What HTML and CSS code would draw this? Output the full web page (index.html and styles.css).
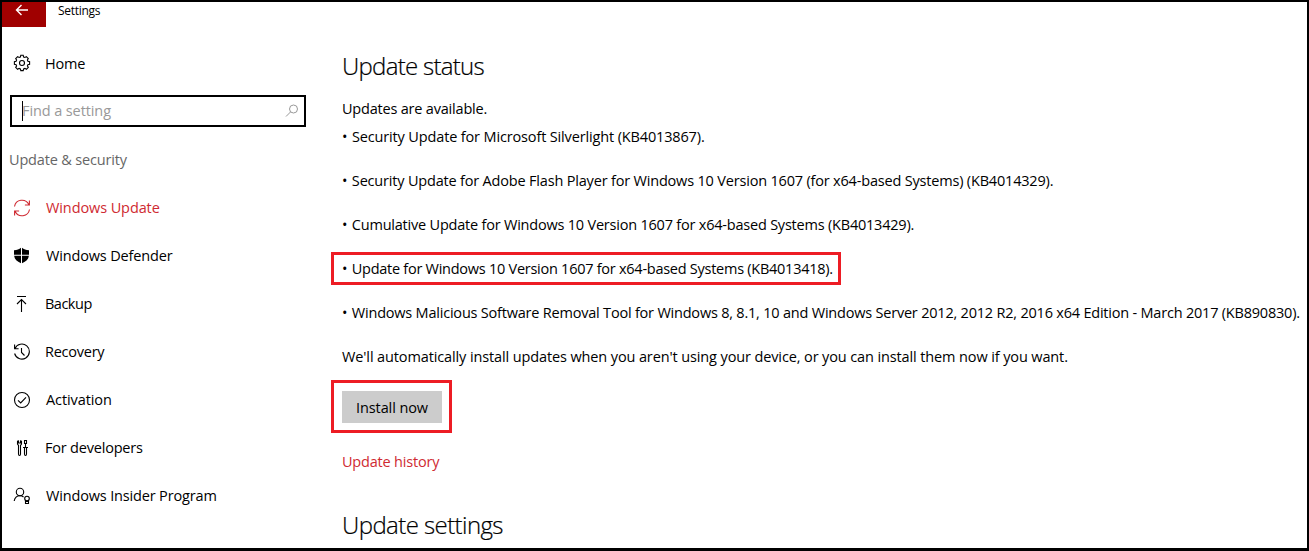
FILE: index.html
```
<!DOCTYPE html>
<html lang="en">
<head>
<meta charset="utf-8">
<title>Settings</title>
<link rel="stylesheet" href="styles.css">
</head>
<body>
<div class="window">
  <header class="titlebar">
    <button class="back" aria-label="Back"><svg width="14" height="12" viewBox="0 0 14 12"><path d="M13 6H1.500M6.500 1L1.500 6l5 5"/></svg></button>
    <span class="title">Settings</span>
  </header>
  <div class="body">
    <nav class="sidebar">
      <a class="item home"><svg class="icon" viewBox="0 0 18 18"><circle cx="9" cy="9" r="2.500"/><path d="M7.800 1.300h2.400l.4 1.700 1.300.5 1.500-.9 1.900 1.900-.9 1.500.5 1.300 1.700.4v2.500l-1.700.4-.5 1.300.9 1.500-1.900 1.900-1.500-.9-1.300.5-.4 1.700H7.800l-.4-1.700-1.300-.5-1.500.9-1.900-1.900.9-1.500-.5-1.300-1.700-.4V7.700l1.700-.4.500-1.300-.9-1.500 1.900-1.900 1.500.9 1.300-.5z"/></svg><span class="w-home">Home</span></a>
      <div class="search"><span class="caret"></span><span class="placeholder">Find a setting</span><svg class="lens" viewBox="0 0 14 14"><circle cx="8.500" cy="5" r="4"/><path d="M5.600 7.900L1 12.500"/></svg></div>
      <h2 class="group">Update &amp; security</h2>
      <a class="item active"><svg class="icon" viewBox="0 0 18 18"><path d="M1.500 7.500A7.600 7.600 0 0 1 15.800 5.500M16.400 1.500v4.500h-4.500M16.500 10.500A7.600 7.600 0 0 1 2.200 12.500M1.600 16.500v-4.500h4.500"/></svg><span class="w-update">Windows Update</span></a>
      <a class="item"><svg class="icon" viewBox="0 0 18 18"><path class="solid" d="M8 .8v7H1V3.200C4 3.200 6.200 2.400 8 .8zM9 .8c1.800 1.600 4 2.400 7 2.400v4.600H9zM1.100 8.800H8v7.400C4 14.500 1.600 12.300 1.100 8.800zM9 8.800h6.900c-.5 3.500-2.800 5.700-6.900 7.400z"/></svg><span class="w-defender">Windows Defender</span></a>
      <a class="item"><svg class="icon" viewBox="0 0 18 18"><path d="M4 1.500h9M8.500 17V4.500M4 9l4.500-4.500L13 9"/></svg><span class="w-backup">Backup</span></a>
      <a class="item"><svg class="icon" viewBox="0 0 18 18"><path d="M2 5.500A7.500 7.500 0 1 1 1.600 10.500M1.600 1.500v4.200h4M8.500 5v4.500l3 3"/></svg><span class="w-recovery">Recovery</span></a>
      <a class="item"><svg class="icon" viewBox="0 0 18 18"><circle cx="9" cy="9" r="7.500"/><path d="M5 9.300l2.700 2.700L13 6.400"/></svg><span class="w-activation">Activation</span></a>
      <a class="item"><svg class="icon" viewBox="0 0 18 18"><path d="M5.500 1.500v2.500h2v-2.500M5.500 1.500L4.500 2.500v2.500l1 1.500v8.500q0 1.500 1 1.500t1-1.500V6.500l1-1.500V2.500L7.500 1.500M11.500 1.500h2v3h-2zM12.500 4.500v4M10 8.500h5M11.500 8.500v6.500q0 1.500 1 1.500t1-1.500V8.500"/></svg><span class="w-dev">For developers</span></a>
      <a class="item"><svg class="icon" viewBox="0 0 18 18"><circle cx="7" cy="5" r="3.700"/><path d="M1.200 14C1.700 10.700 4 8.700 7 8.700c1.500 0 2.600.4 3.500 1.300"/><circle cx="14" cy="11.500" r="2.300"/><path d="M12.500 13.500v3h3v-3M12.500 14.500h3"/></svg><span class="w-insider">Windows Insider Program</span></a>
    </nav>
    <main class="content">
      <h1 class="heading w-status">Update status</h1>
      <p class="available">Updates are available.</p>
      <ul class="updates">
        <li class="w-l1"><span class="dot">•</span> Security Update for Microsoft Silverlight (KB4013867).</li>
        <li class="w-l2"><span class="dot">•</span> Security Update for Adobe Flash Player for Windows 10 Version 1607 (for x64-based Systems) (KB4014329).</li>
        <li class="w-l3"><span class="dot">•</span> Cumulative Update for Windows 10 Version 1607 for x64-based Systems (KB4013429).</li>
        <li class="marked"><span class="dot">•</span> Update for Windows 10 Version 1607 for x64-based Systems (KB4013418).</li>
        <li class="w-l5"><span class="dot">•</span> Windows Malicious Software Removal Tool for Windows 8, 8.1, 10 and Windows Server 2012, 2012 R2, 2016 x64 Edition - March 2017 (KB890830).</li>
      </ul>
      <p class="note">We'll automatically install updates when you aren't using your device, or you can install them now if you want.</p>
      <div class="install-box"><button class="install">Install now</button></div>
      <a class="history">Update history</a>
      <h1 class="heading w-settings">Update settings</h1>
    </main>
  </div>
</div>
</body>
</html>
```
FILE: styles.css
```
* { box-sizing: border-box; }
body { margin: 0; font: 14.5px/20px "Open Sans", "Noto Sans", sans-serif; color: #000; background: #fff; }
h1, h2, p, ul { margin: 0; padding: 0; font-weight: 400; }
button { border: 0; padding: 0; font: inherit; color: inherit; }
.window { width: 1309px; height: 551px; border: 2px solid #000; border-bottom-width: 3px; overflow: hidden; }
.titlebar { display: flex; height: 25px; }
.back { width: 44px; height: 25px; background: #a00000; padding-right: 4px; display: flex; justify-content: center; padding-top: 2px; }
.back svg { fill: none; stroke: #fff; stroke-width: 1.4; }
.title { font-size: 12px; line-height: 18px; margin-left: 12px; letter-spacing: -.3px; }
.body { display: flex; }
.sidebar { width: 329px; padding-top: 12px; flex: none; }
.item { display: flex; align-items: center; height: 48px; padding-left: 11px; gap: 14px; white-space: nowrap; }
.icon { width: 18px; height: 18px; fill: none; stroke: #000; stroke-width: 1.1; flex: none; }
.icon .solid { fill: #000; stroke: none; }
.home span { padding-top: 2px; }
.active { color: #cf2a32; }
.active .icon { stroke: #cf2a32; }
.w-home { letter-spacing: -.2px; }
.w-update, .w-defender, .w-insider, .w-activation { padding-left: 1px; letter-spacing: -.16px; }
.w-update, .w-activation { letter-spacing: -.1px; }
.w-backup { letter-spacing: -.5px; }
.w-recovery { letter-spacing: -.25px; }
.w-dev { letter-spacing: -.2px; }
.search { margin: 8px 0 0 8px; width: 296px; height: 32px; border: 2px solid #000; display: flex; align-items: center; padding: 0 5px 0 10px; color: #999; }
.caret { width: 1px; height: 20px; margin-right: -1px; background: #000; }
.placeholder { flex: 1; letter-spacing: -.1px; }
.lens { width: 14px; height: 14px; fill: none; stroke: #999; }
.group { font-size: 14.5px; line-height: 20px; margin: 23px 0 14px 7px; color: #666; letter-spacing: -.17px; }
.content { padding: 23px 0 0 11px; white-space: nowrap; flex: none; }
.heading { font-size: 24px; line-height: 32px; font-weight: 300; -webkit-text-stroke: .2px #000; }
.w-status { letter-spacing: -.72px; }
.w-settings { letter-spacing: -.58px; }
.available { margin-top: 17px; letter-spacing: -.2px; }
.updates { list-style: none; margin-top: 8px; display: flex; flex-direction: column; gap: 24px; align-items: flex-start; }
.dot { margin-right: 1px; }
.w-l1 { letter-spacing: -.145px; }
.w-l2 { letter-spacing: -.185px; }
.w-l3 { letter-spacing: -.21px; }
.w-l5 { letter-spacing: -.208px; }
.marked { margin: -7px 0 -6px -11px; width: 510px; height: 33px; border: 3px solid #ed1c24; padding: 4px 0 0 8px; letter-spacing: -.26px; }
.note { margin-top: 24px; letter-spacing: -.12px; }
.install-box { margin: 13px 0 0 -11px; width: 121px; height: 53px; border: 3px solid #ed1c24; padding: 8px; }
.install { display: block; width: 100px; height: 32px; padding-top: 2px; background: #ccc; letter-spacing: -.1px; }
.history { display: block; margin: 19px 0 37px; color: #cf2a32; letter-spacing: -.2px; }
```
